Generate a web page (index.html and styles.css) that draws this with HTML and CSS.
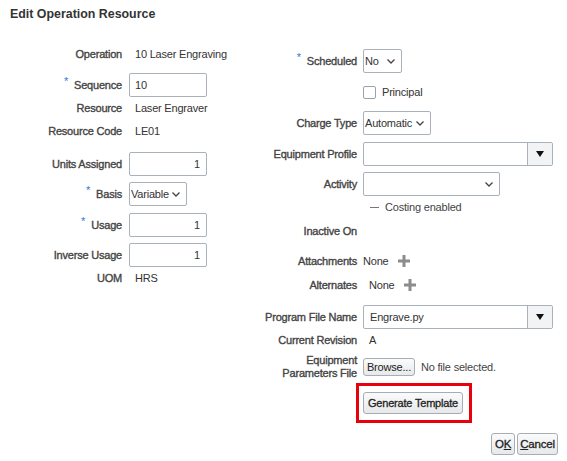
FILE: index.html
```html
<!DOCTYPE html>
<html>
<head>
<meta charset="utf-8">
<link rel="stylesheet" href="styles.css">
</head>
<body>
<div class="dialog">
  <h1 class="title">Edit Operation Resource</h1>
  <div class="form">
    <div class="col col-left">
      <div class="row h20 mt0"><span class="lbl">Operation</span><span class="val">10 Laser Engraving</span></div>
      <div class="row h24 mt9"><span class="lbl"><span class="req">*</span>Sequence</span><span class="input w78">10</span></div>
      <div class="row h20 mt1"><span class="lbl">Resource</span><span class="val">Laser Engraver</span></div>
      <div class="row h20 mt3"><span class="lbl">Resource Code</span><span class="val">LE01</span></div>
      <div class="row h24 mt11"><span class="lbl">Units Assigned</span><span class="input w78 num">1</span></div>
      <div class="row h24 mt6"><span class="lbl"><span class="req">*</span>Basis</span><span class="select w58">Variable<svg class="chev" viewBox="0 0 8 5"><polyline points="0.5,0.5 4,4 7.5,0.5"/></svg></span></div>
      <div class="row h24 mt7"><span class="lbl"><span class="req">*</span>Usage</span><span class="input w78 num">1</span></div>
      <div class="row h24 mt6"><span class="lbl">Inverse Usage</span><span class="input w78 num">1</span></div>
      <div class="row h20 mt1"><span class="lbl">UOM</span><span class="val">HRS</span></div>
    </div>
    <div class="col col-right">
      <div class="row h24 mt5"><span class="lbl"><span class="req">*</span>Scheduled</span><span class="select w39">No<svg class="chev" viewBox="0 0 8 5"><polyline points="0.5,0.5 4,4 7.5,0.5"/></svg></span></div>
      <div class="row h20 mt9"><span class="lbl"></span><span class="check-wrap"><span class="check"></span>Principal</span></div>
      <div class="row h24 mt9"><span class="lbl">Charge Type</span><span class="select w68">Automatic<svg class="chev" viewBox="0 0 8 5"><polyline points="0.5,0.5 4,4 7.5,0.5"/></svg></span></div>
      <div class="row h24 mt7"><span class="lbl">Equipment Profile</span><span class="combo"><span class="combo-text"></span><span class="combo-btn"><svg class="tri" viewBox="0 0 8 6"><polygon points="0,0 8,0 4,6"/></svg></span></span></div>
      <div class="row h24 mt6"><span class="lbl">Activity</span><span class="select w137"><svg class="chev" viewBox="0 0 8 5"><polyline points="0.5,0.5 4,4 7.5,0.5"/></svg></span></div>
      <div class="row h16 mt3"><span class="lbl"></span><span class="val costing"><span class="dash"></span>Costing enabled</span></div>
      <div class="row h20 mt6"><span class="lbl">Inactive On</span><span class="val"></span></div>
      <div class="row h20 mt10"><span class="lbl">Attachments</span><span class="val flat">None<svg class="plus" viewBox="0 0 12 12"><path d="M4.5 0h3v4.5H12v3H7.5V12h-3V7.5H0v-3h4.5z"/></svg></span></div>
      <div class="row h20 mt4"><span class="lbl">Alternates</span><span class="val">None<svg class="plus" viewBox="0 0 12 12"><path d="M4.5 0h3v4.5H12v3H7.5V12h-3V7.5H0v-3h4.5z"/></svg></span></div>
      <div class="row h24 mt10"><span class="lbl">Program File Name</span><span class="combo"><span class="combo-text">Engrave.py</span><span class="combo-btn"><svg class="tri" viewBox="0 0 8 6"><polygon points="0,0 8,0 4,6"/></svg></span></span></div>
      <div class="row h20 mt1"><span class="lbl">Current Revision</span><span class="val">A</span></div>
      <div class="row h27 mt3"><span class="lbl two">Equipment<br>Parameters File</span><span class="file"><span class="btn browse">Browse...</span><span class="nofile">No file selected.</span></span></div>
      <div class="row h22 mt12"><span class="lbl"></span><span class="gen-wrap"><span class="btn gen">Generate Template</span><span class="highlight"></span></span></div>
    </div>
  </div>
  <div class="footer">
    <span class="btn foot ok">O<u>K</u></span>
    <span class="btn foot cancel"><u>C</u>ancel</span>
  </div>
</div>
</body>
</html>
```
FILE: styles.css
```css
html, body {
  margin: 0;
  padding: 0;
  background: #fff;
}
body {
  font-family: "Liberation Sans", Arial, sans-serif;
  font-size: 11px;
  color: #333;
  letter-spacing: -0.2px;
}
.dialog {
  width: 567px;
  height: 461px;
  box-sizing: border-box;
  padding: 8px 9px 0 0;
}
.title {
  margin: 0 0 0 10px;
  font-size: 12.4px;
  line-height: 13px;
  font-weight: bold;
  color: #333;
  letter-spacing: 0;
}
.form {
  display: flex;
  margin-top: 23px;
}
.col {
  display: flex;
  flex-direction: column;
}
.col-left { width: 240px; }
.col-right { flex: 1; }
.row {
  display: grid;
  align-items: center;
  column-gap: 7px;
}
.col-left .row { grid-template-columns: 122px auto; }
.col-right .row { grid-template-columns: 117px auto; column-gap: 6px; }
.h16 { height: 16px; }
.h20 { height: 20px; }
.h22 { height: 22px; }
.h24 { height: 24px; }
.h27 { height: 27px; }
.mt0 { margin-top: 0; }
.mt1 { margin-top: 1px; }
.mt3 { margin-top: 3px; }
.mt4 { margin-top: 4px; }
.mt5 { margin-top: 5px; }
.mt6 { margin-top: 6px; }
.mt7 { margin-top: 7px; }
.mt9 { margin-top: 9px; }
.mt10 { margin-top: 10px; }
.mt11 { margin-top: 11px; }
.mt12 { margin-top: 12px; }
.lbl {
  text-align: right;
  color: #444;
  -webkit-text-stroke: 0.35px #444;
  white-space: nowrap;
}
.lbl.two {
  line-height: 13px;
}
.req {
  color: #2c7bd6;
  font-size: 11px;
  position: relative;
  top: -4px;
  margin-right: 6px;
  -webkit-text-stroke: 0;
}
.val {
  padding-left: 6px;
  display: flex;
  align-items: center;
  white-space: nowrap;
}
.val.flat { padding-left: 0; }
.input, .select, .combo {
  box-sizing: border-box;
  height: 24px;
  border: 1px solid #a9b2bb;
  border-radius: 2px;
  background: #fff;
  display: flex;
  align-items: center;
}
.input { padding: 0 6px 0 5px; }
.input.num { justify-content: flex-end; }
.w78 { width: 78px; }
.w58 { width: 58px; }
.w39 { width: 39px; }
.w68 { width: 68px; }
.w137 { width: 137px; }
.select {
  padding: 0 6px 0 1px;
  justify-content: space-between;
  color: #333;
}
.chev {
  width: 8px;
  height: 5px;
  margin-left: auto;
  fill: none;
  stroke: #444;
  stroke-width: 1.3;
}
.check-wrap {
  display: flex;
  align-items: center;
}
.check {
  width: 13px;
  height: 13px;
  box-sizing: border-box;
  border: 1px solid #9aa3ad;
  border-radius: 2px;
  background: #fff;
  margin-right: 6px;
}
.combo {
  width: 190px;
  overflow: hidden;
}
.combo-text {
  flex: 1;
  padding-left: 6px;
}
.combo-btn {
  width: 24px;
  align-self: stretch;
  border-left: 1px solid #a9b2bb;
  background: #f1f3f5;
  display: flex;
  align-items: center;
  justify-content: center;
}
.tri {
  width: 8px;
  height: 6px;
  fill: #111;
}
.costing { padding-left: 7px; color: #444; }
.dash {
  width: 9px;
  height: 1px;
  background: #777;
  margin-right: 6px;
}
.plus {
  width: 12px;
  height: 12px;
  fill: #8c8c8c;
  margin-left: 9px;
}
.file {
  display: flex;
  align-items: center;
}
.btn {
  box-sizing: border-box;
  display: inline-flex;
  align-items: center;
  justify-content: center;
  border: 1px solid #a6adb4;
  border-radius: 3px;
  background: linear-gradient(#fbfbfb, #e6e8ea);
  color: #222;
  white-space: nowrap;
}
.browse {
  height: 18px;
  width: 52px;
  font-size: 11px;
}
.nofile {
  margin-left: 6px;
  color: #444;
}
.gen-wrap {
  position: relative;
  display: inline-flex;
  width: 100px;
}
.gen {
  width: 100px;
  height: 22px;
  -webkit-text-stroke: 0.3px #222;
}
.highlight {
  position: absolute;
  left: -7px;
  top: -9px;
  right: -9px;
  bottom: -9px;
  border: 3px solid #e8000b;
}
.footer {
  display: flex;
  justify-content: flex-end;
  gap: 2px;
  margin-top: 19px;
}
.foot {
  height: 22px;
  -webkit-text-stroke: 0.3px #222;
  font-size: 11.5px;
}
.ok { width: 24px; }
.cancel { width: 41px; }
.foot u { text-underline-offset: 1px; }
```
